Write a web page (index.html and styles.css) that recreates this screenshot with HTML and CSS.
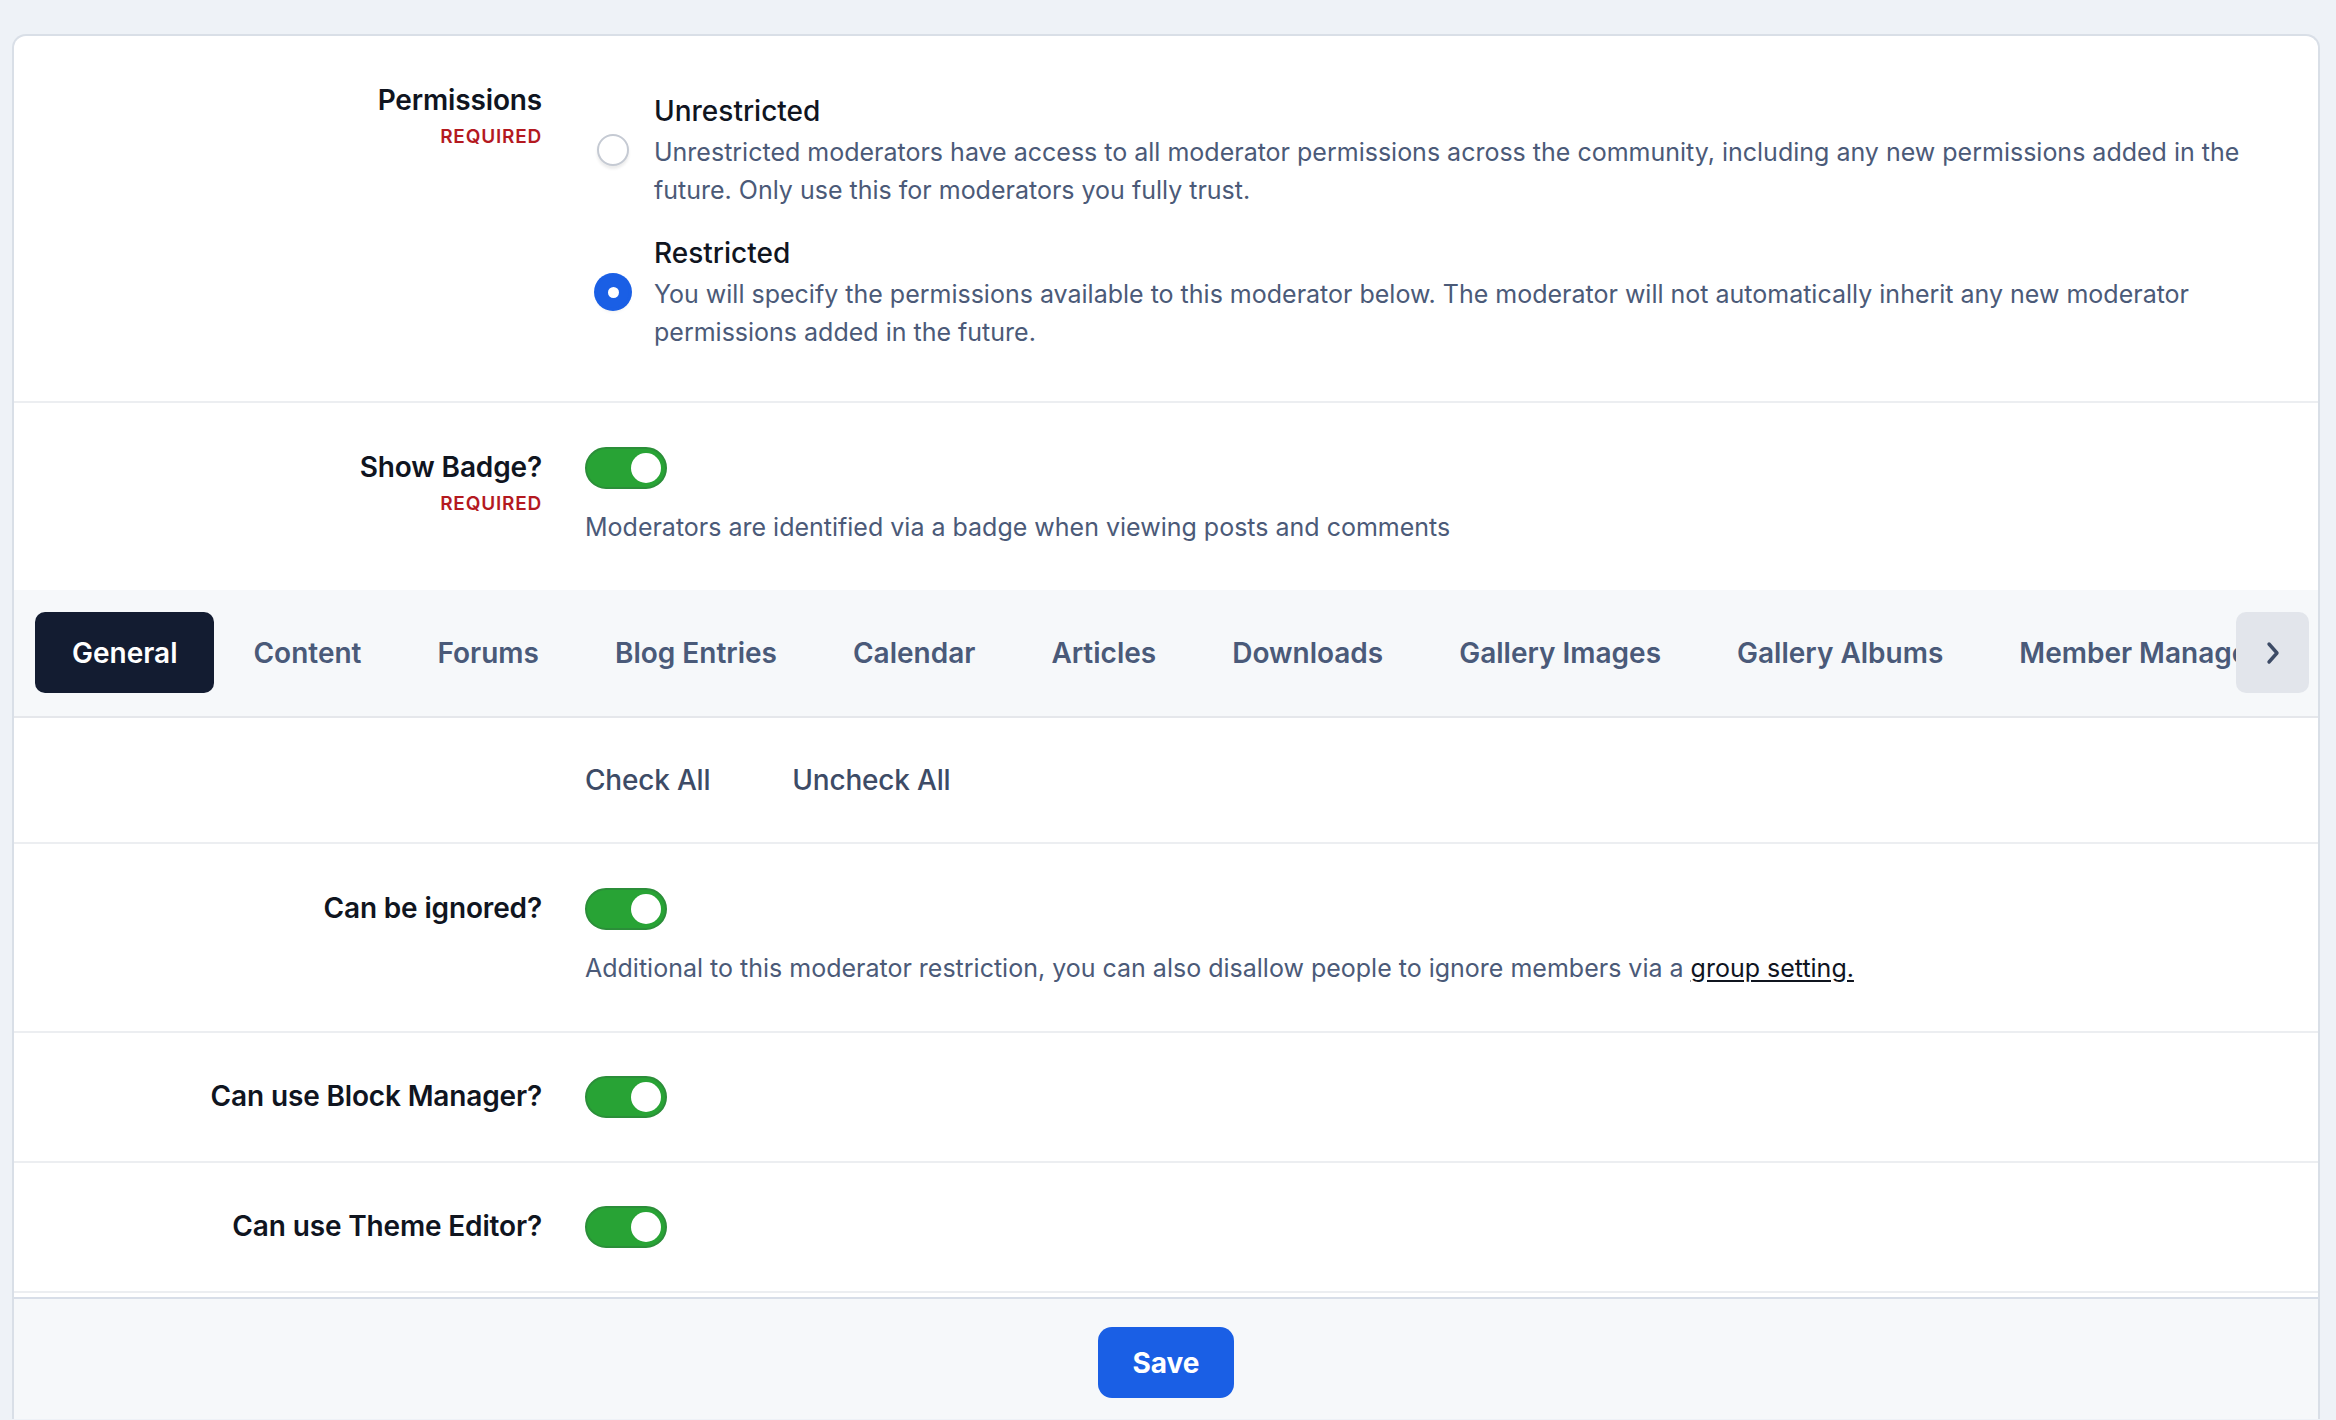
FILE: index.html
```html
<!DOCTYPE html>
<html>
<head lang="en">
    <meta charset="UTF-8">
    <title>Moderator permissions</title>
    <link rel="stylesheet" href="styles.css">
</head>
<body>
<div id="page">
    <div id="card">
        <div class="card-body">
            <div class="row">
                <div class="row-label">
                    Permissions
                    <div class="required">REQUIRED</div>
                </div>
                <div class="radio-list">
                    <div class="option">
                        <span class="radio"></span>
                        <div class="option-text">
                            <div class="option-title">Unrestricted</div>
                            <div class="desc">Unrestricted moderators have access to all moderator permissions across the community, including any new permissions added in the future. Only use this for moderators you fully trust.</div>
                        </div>
                    </div>
                    <div class="option">
                        <span class="radio checked"></span>
                        <div class="option-text">
                            <div class="option-title">Restricted</div>
                            <div class="desc">You will specify the permissions available to this moderator below. The moderator will not automatically inherit any new moderator permissions added in the future.</div>
                        </div>
                    </div>
                </div>
            </div>

            <div class="row no-border">
                <div class="row-label">
                    Show Badge?
                    <div class="required">REQUIRED</div>
                </div>
                <div>
                    <span class="toggle"><span class="knob"></span></span>
                    <div class="desc toggle-desc">Moderators are identified via a badge when viewing posts and comments</div>
                </div>
            </div>

            <div class="tabbar">
                <div class="tabs">
                    <span class="tab active">General</span>
                    <span class="tab">Content</span>
                    <span class="tab">Forums</span>
                    <span class="tab">Blog Entries</span>
                    <span class="tab">Calendar</span>
                    <span class="tab">Articles</span>
                    <span class="tab">Downloads</span>
                    <span class="tab">Gallery Images</span>
                    <span class="tab">Gallery Albums</span>
                    <span class="tab">Member Management</span>
                    <span class="tab">Clubs</span>
                </div>
                <span class="tab-next">
                    <svg width="14" height="24" viewBox="0 0 14 24"><path d="M3 3l8 9-8 9" fill="none" stroke="#3d4b66" stroke-width="3.4" stroke-linecap="round" stroke-linejoin="round"/></svg>
                </span>
            </div>

            <div class="row actions-row">
                <div></div>
                <div class="actions">
                    <span class="action">Check All</span>
                    <span class="action">Uncheck All</span>
                </div>
            </div>

            <div class="row">
                <div class="row-label">Can be ignored?</div>
                <div>
                    <span class="toggle"><span class="knob"></span></span>
                    <div class="desc toggle-desc">Additional to this moderator restriction, you can also disallow people to ignore members via a <a href="#">group setting.</a></div>
                </div>
            </div>

            <div class="row simple">
                <div class="row-label">Can use Block Manager?</div>
                <div><span class="toggle"><span class="knob"></span></span></div>
            </div>

            <div class="row simple">
                <div class="row-label">Can use Theme Editor?</div>
                <div><span class="toggle"><span class="knob"></span></span></div>
            </div>
        </div>
        <div class="footer">
            <button class="save">Save</button>
        </div>
    </div>
</div>
</body>
</html>
```

FILE: styles.css
```css
*{
    padding: 0;
    margin: 0;
    box-sizing: border-box;
}
a{
    color: #10151f;
    text-decoration: underline;
    text-underline-offset: 3px;
}
html,body{
    height: 100%;
    overflow: hidden;
}
body{
    background-color: #eef2f7;
    font-family: Inter, "Noto Sans", sans-serif;
    color: #10151f;
}
#page{
    padding: 34px 16px 0 12px;
}
#card{
    background-color: #ffffff;
    border: 2px solid #d9dfe7;
    border-bottom: 0;
    border-radius: 14px 14px 0 0;
    overflow: hidden;
}
.card-body{
    padding-bottom: 4px;
}
.row{
    display: grid;
    grid-template-columns: 528px 1fr;
    column-gap: 43px;
    padding: 44px 44px 44px 0;
    border-bottom: 2px solid #eceef1;
}
.row.no-border{
    border-bottom: 0;
}
.row.simple{
    padding-top: 43px;
    padding-bottom: 43px;
}
.row-label{
    text-align: right;
    font-size: 28px;
    line-height: 40px;
    font-weight: 600;
    letter-spacing: -0.15px;
}
.required{
    font-size: 19px;
    line-height: 28px;
    font-weight: 600;
    letter-spacing: 0.8px;
    color: #b4191f;
    margin-top: 3px;
}
.desc{
    font-size: 25px;
    line-height: 38px;
    color: #4b5a78;
}
.radio-list{
    padding: 11px 0 6px;
}
.option{
    display: flex;
    align-items: center;
}
.option + .option{
    margin-top: 24px;
}
.radio{
    flex-shrink: 0;
    width: 32px;
    height: 32px;
    margin-left: 12px;
    margin-right: 25px;
    border-radius: 50%;
    border: 2px solid #c5cad3;
    background-color: #ffffff;
    box-shadow: 0 3px 3px rgba(0,0,0,0.08);
}
.radio.checked{
    border: 0;
    background-color: #1a5fe5;
    box-shadow: 0 0 0 3px #1a5fe5, 0 3px 4px rgba(0,0,0,0.1);
    display: flex;
    align-items: center;
    justify-content: center;
}
.radio.checked:after{
    content: "";
    width: 11px;
    height: 11px;
    border-radius: 50%;
    background-color: #ffffff;
}
.option-title{
    font-size: 28px;
    line-height: 40px;
    font-weight: 500;
    margin-bottom: 2px;
}
.toggle{
    display: flex;
    justify-content: flex-end;
    align-items: center;
    width: 82px;
    height: 42px;
    padding: 0 4px;
    border-radius: 21px;
    background-color: #28a335;
    border: 2px solid #2b8e39;
}
.knob{
    width: 30px;
    height: 30px;
    border-radius: 50%;
    background-color: #ffffff;
}
.toggle-desc{
    margin-top: 19px;
}
.tabbar{
    display: flex;
    align-items: center;
    background-color: #f6f8fa;
    padding: 22px 9px 23px 21px;
    border-bottom: 2px solid #e5e7eb;
}
.tabs{
    flex: 1;
    min-width: 0;
    overflow: hidden;
    display: flex;
    gap: 2px;
}
.tab{
    flex-shrink: 0;
    display: flex;
    align-items: center;
    height: 81px;
    padding: 0 37px;
    border-radius: 10px;
    font-size: 28px;
    font-weight: 600;
    color: #4a5a79;
    white-space: nowrap;
    cursor: pointer;
}
.tab.active{
    background-color: #131c31;
    color: #ffffff;
}
.tab-next{
    flex-shrink: 0;
    display: flex;
    align-items: center;
    justify-content: center;
    width: 73px;
    height: 81px;
    border-radius: 10px;
    background-color: #e2e5eb;
    cursor: pointer;
}
.actions-row{
    padding-top: 42px;
    padding-bottom: 42px;
}
.actions{
    display: flex;
    gap: 82px;
}
.action{
    font-size: 28px;
    line-height: 40px;
    font-weight: 500;
    letter-spacing: -0.2px;
    color: #3d4b66;
    cursor: pointer;
}
.footer{
    background-color: #f6f8fa;
    border-top: 2px solid #d8dee8;
    padding: 28px 0 21px;
    text-align: center;
}
.save{
    width: 136px;
    height: 71px;
    border: 0;
    border-radius: 14px;
    background-color: #1a5fe5;
    color: #ffffff;
    font-family: Inter, "Noto Sans", sans-serif;
    font-size: 28px;
    font-weight: 700;
    cursor: pointer;
}
```
